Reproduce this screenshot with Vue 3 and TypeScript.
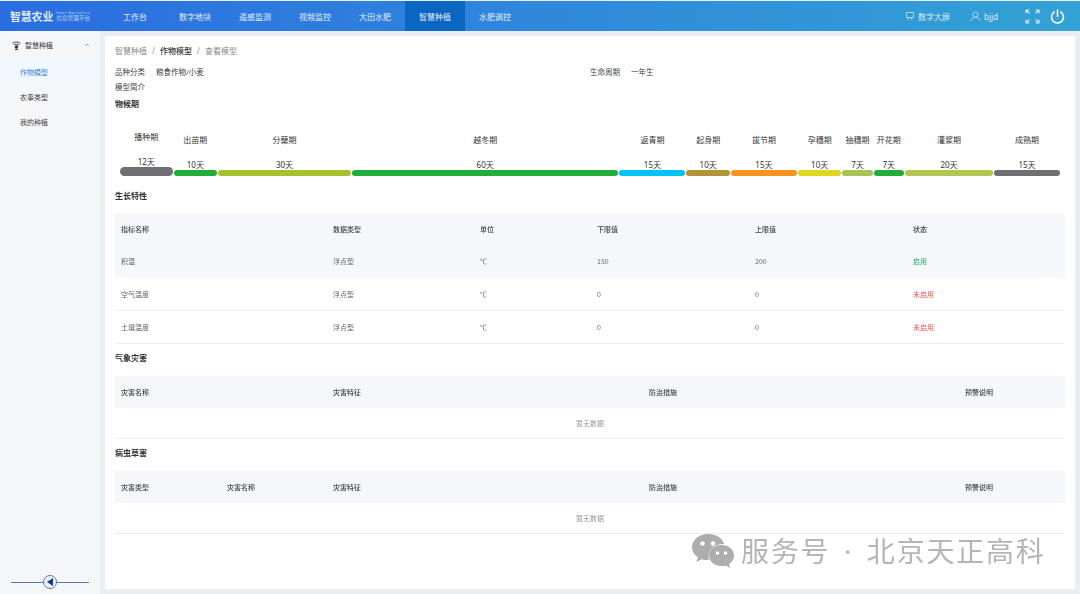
<script setup lang="ts">
const navItems = ["工作台", "数字地块", "遥感监测", "视频监控", "大田水肥", "智慧种植", "水肥调控"];
const sideItems = ["作物模型", "农事类型", "我的种植"];

const stages = [
  { name: "播种期", days: 12, color: "#6f6f72" },
  { name: "出苗期", days: 10, color: "#22ac38" },
  { name: "分蘖期", days: 30, color: "#a5c22e" },
  { name: "越冬期", days: 60, color: "#22ac38" },
  { name: "返青期", days: 15, color: "#00c3f5" },
  { name: "起身期", days: 10, color: "#b1943a" },
  { name: "拔节期", days: 15, color: "#f7931e" },
  { name: "孕穗期", days: 10, color: "#e0d61e" },
  { name: "抽穗期", days: 7, color: "#a9c256" },
  { name: "开花期", days: 7, color: "#22ac38" },
  { name: "灌浆期", days: 20, color: "#b0c650" },
  { name: "成熟期", days: 15, color: "#6f6f72" }
];

const traitRows = [
  { name: "积温", type: "浮点型", unit: "℃", low: 150, high: 200, on: true },
  { name: "空气温度", type: "浮点型", unit: "℃", low: 0, high: 0, on: false },
  { name: "土壤温度", type: "浮点型", unit: "℃", low: 0, high: 0, on: false }
];
const traitCols = [
  { label: "指标名称", width: 212 },
  { label: "数据类型", width: 147 },
  { label: "单位", width: 117 },
  { label: "下限值", width: 158 },
  { label: "上限值", width: 158 },
  { label: "状态", width: 158 }
];
const weatherCols = [
  { label: "灾害名称", width: 212 },
  { label: "灾害特征", width: 316 },
  { label: "防治措施", width: 316 },
  { label: "预警说明", width: 106 }
];
const pestCols = [
  { label: "灾害类型", width: 106 },
  { label: "灾害名称", width: 106 },
  { label: "灾害特征", width: 316 },
  { label: "防治措施", width: 316 },
  { label: "预警说明", width: 106 }
];
const emptyTables = [
  { title: "气象灾害", cols: weatherCols },
  { title: "病虫草害", cols: pestCols }
];
</script>

<template>
  <div class="page">
    <header class="topbar">
      <div class="logo">
        <span class="logo-main">智慧农业</span>
        <span class="logo-sub">
          <small>Smart Agriculture</small>
          <span>信息管理平台</span>
        </span>
      </div>
      <nav class="nav">
        <a v-for="item in navItems" :key="item" class="nav-item" :class="{ active: item === '智慧种植' }">{{ item }}</a>
      </nav>
      <div class="tools">
        <span class="tool screen">
          <svg width="10" height="10" viewBox="0 0 10 10" fill="none" stroke="currentColor" stroke-width="0.7">
            <path d="M1.5 1.5h7v5h-7zM3.500 6.500 3 9M6.500 6.500 7 9" />
          </svg>
          数字大屏
        </span>
        <span class="tool user">
          <svg width="11" height="11" viewBox="0 0 11 11" fill="none" stroke="currentColor" stroke-width="0.7">
            <circle cx="5.500" cy="3.600" r="2.600" />
            <path d="M1 10c.4-2.400 2.200-3.500 4.500-3.500S9.600 7.600 10 10" />
          </svg>
          bjjd
        </span>
        <svg class="full" width="15" height="15" viewBox="0 0 15 15" fill="none" stroke="currentColor" stroke-width="1.100">
          <path d="M1 4.500V1h3.500M1 1l3.500 3.500M14 4.500V1h-3.500M14 1l-3.500 3.500M1 10.500V14h3.500M1 14l3.500-3.500M14 10.500V14h-3.500M14 14l-3.500-3.500" />
        </svg>
        <svg class="power" width="15" height="15" viewBox="0 0 15 15" fill="none" stroke="currentColor" stroke-width="1.500" stroke-linecap="round">
          <path d="M7.500 1v6.500M4.200 3a6 6 0 1 0 6.600 0" />
        </svg>
      </div>
    </header>

    <div class="body">
      <aside class="sidebar">
        <div class="side-head">
          <svg width="9" height="9" viewBox="0 0 9 9" fill="none" stroke="#333" stroke-width="0.9">
            <path d="M.5 2.200C3 .6 6 .6 8.500 2.200M1.800 4C3.500 3 5.500 3 7.200 4" />
            <circle cx="4.500" cy="6" r="1.700" fill="#333" stroke="none" />
            <path d="M3 8.500h3" />
          </svg>
          <span>智慧种植</span>
          <svg class="chev" width="6" height="4" viewBox="0 0 6 4" fill="none" stroke="#888" stroke-width="0.7">
            <path d="M1 3 3 1l2 2" />
          </svg>
        </div>
        <a v-for="item in sideItems" :key="item" class="side-item" :class="{ active: item === '作物模型' }">{{ item }}</a>
        <div class="collapse">
          <span class="collapse-btn">
            <svg width="7" height="8" viewBox="0 0 7 8"><path d="M6 0v8L0 4z" fill="#123a8c" /></svg>
          </span>
        </div>
      </aside>

      <main class="card">
        <div class="crumbs">
          <span>智慧种植</span><i>/</i><b>作物模型</b><i>/</i><span>查看模型</span>
        </div>

        <div class="info">
          <div class="info-row">
            <span class="info-cell"><label>品种分类</label>粮食作物/小麦</span>
            <span class="info-cell"><label>生命周期</label>一年生</span>
          </div>
          <div class="info-row"><span class="info-cell"><label>模型简介</label></span></div>
        </div>

        <h3 class="section phen-title">物候期</h3>
        <div class="timeline">
          <div
            v-for="(s, i) in stages"
            :key="s.name"
            class="stage"
            :class="{ first: i === 0 }"
            :style="{ flexGrow: s.days }"
          >
            <span class="stage-name">{{ s.name }}</span>
            <span class="stage-days">{{ s.days }}天</span>
            <span class="stage-bar" :style="{ background: s.color }"></span>
          </div>
        </div>

        <h3 class="section trait-title">生长特性</h3>
        <table class="grid">
          <colgroup><col v-for="c in traitCols" :key="c.label" :style="{ width: c.width + 'px' }" /></colgroup>
          <thead>
            <tr><th v-for="c in traitCols" :key="c.label">{{ c.label }}</th></tr>
          </thead>
          <tbody>
            <tr v-for="(r, i) in traitRows" :key="r.name" :class="{ hover: i === 0 }">
              <td>{{ r.name }}</td>
              <td>{{ r.type }}</td>
              <td>{{ r.unit }}</td>
              <td>{{ r.low }}</td>
              <td>{{ r.high }}</td>
              <td :class="r.on ? 'on' : 'off'">{{ r.on ? "启用" : "未启用" }}</td>
            </tr>
          </tbody>
        </table>

        <template v-for="t in emptyTables" :key="t.title">
          <h3 class="section table-title">{{ t.title }}</h3>
          <table class="grid">
            <colgroup><col v-for="c in t.cols" :key="c.label" :style="{ width: c.width + 'px' }" /></colgroup>
            <thead>
              <tr><th v-for="c in t.cols" :key="c.label">{{ c.label }}</th></tr>
            </thead>
            <tbody>
              <tr><td class="empty" :colspan="t.cols.length">暂无数据</td></tr>
            </tbody>
          </table>
        </template>
      </main>
    </div>

    <div class="watermark">
      <svg width="42" height="34" viewBox="0 0 42 34">
        <path d="M16 0C7.200 0 0 5.900 0 13.200c0 4.100 2.300 7.700 5.800 10.100L4.400 28l5.300-2.800c1.900.6 4 .9 6.200.9.400 0 .8 0 1.200 0-.4-1.200-.6-2.400-.6-3.700 0-6.900 6.500-12.400 14.500-12.400.4 0 .8 0 1.200.1C30.600 4.100 24 0 16 0z" fill="#adadad" />
        <circle cx="10.500" cy="9.500" r="2.200" fill="#fff" />
        <circle cx="21" cy="9.500" r="2.200" fill="#fff" />
        <path d="M29.500 11C22.600 11 17 15.500 17 21.500S22.600 32 29.500 32c1.500 0 2.900-.2 4.200-.6L38 34l-1-3.800c3-2 5-5.100 5-8.700C42 15.500 36.400 11 29.500 11z" fill="#adadad" />
        <circle cx="25.500" cy="19" r="1.800" fill="#fff" />
        <circle cx="33.500" cy="19" r="1.800" fill="#fff" />
      </svg>
      <span>服务号 · 北京天正高科</span>
    </div>
  </div>
</template>

<style scoped>
.page {
  position: relative;
  width: 1080px;
  height: 594px;
  overflow: hidden;
  display: flex;
  flex-direction: column;
  background: #e9eef1;
  font-family: "Noto Sans", "Noto Sans CJK SC", sans-serif;
  color: #333;
}
.topbar {
  flex: none;
  height: 30px;
  margin-top: 1px;
  display: flex;
  align-items: center;
  background: linear-gradient(90deg, #2a6de0 0%, #2f82dc 40%, #33a2d4 100%);
  color: #fff;
}
.logo {
  width: 105px;
  padding-left: 10px;
  box-sizing: border-box;
  display: flex;
  align-items: center;
  gap: 3px;
}
.logo-main {
  font-size: 10.8px;
  font-weight: 700;
  color: #dfeafa;
  white-space: nowrap;
}
.logo-sub {
  display: flex;
  flex-direction: column;
  font-size: 5.700px;
  line-height: 6px;
  color: #b9d2f5;
  white-space: nowrap;
}
.logo-sub small {
  font-size: 3.500px;
  line-height: 4px;
  letter-spacing: 0.3px;
}
.nav {
  display: flex;
  height: 100%;
}
.nav-item {
  width: 60px;
  display: flex;
  align-items: center;
  justify-content: center;
  font-size: 8px;
  color: #e3eefb;
}
.nav-item.active {
  background: #0b66c3;
}
.tools {
  margin-left: auto;
  display: flex;
  align-items: center;
  font-size: 8px;
  color: #dcecf8;
}
.tool {
  display: flex;
  align-items: center;
  gap: 3px;
}
.screen {
  margin-right: 20px;
}
.user {
  margin-right: 27px;
}
.full {
  margin-right: 10px;
}
.power {
  margin-right: 15px;
  color: #fff;
}
.body {
  flex: 1;
  min-height: 0;
  display: flex;
  padding: 5px 5px 5px 0;
  gap: 5px;
}
.sidebar {
  position: relative;
  width: 100px;
  margin: -5px 0 -5px;
  background: #f5f6f7;
  display: flex;
  flex-direction: column;
  padding-top: 2px;
}
.side-head {
  height: 24px;
  margin-bottom: 2px;
  display: flex;
  align-items: center;
  gap: 4px;
  padding: 0 10px 0 12px;
  font-size: 7px;
  color: #333;
}
.chev {
  margin-left: auto;
}
.side-item {
  height: 25px;
  display: flex;
  align-items: center;
  padding-left: 20px;
  font-size: 7px;
  color: #444;
}
.side-item.active {
  background: #f0f7fd;
  color: #3f80dc;
}
.collapse {
  position: absolute;
  left: 11px;
  right: 11px;
  bottom: 11px;
  height: 1px;
  background: #5a76b8;
}
.collapse-btn {
  position: absolute;
  left: 32px;
  top: -7px;
  width: 14px;
  height: 14px;
  box-sizing: border-box;
  border: 1px solid #5a76b8;
  border-radius: 50%;
  background: #eef1f8;
  display: flex;
  align-items: center;
  justify-content: center;
}
.card {
  flex: 1;
  min-width: 0;
  background: #fff;
  padding: 8px 10px 0;
}
.crumbs {
  height: 13px;
  display: flex;
  align-items: center;
  font-size: 8px;
  color: #8a8a8a;
}
.crumbs i {
  font-style: normal;
  margin: 0 5px;
  color: #999;
}
.crumbs b {
  font-weight: 500;
  color: #333;
}
.info {
  margin-top: 7px;
  font-size: 7.500px;
  color: #444;
}
.info-row {
  display: flex;
  height: 15px;
  align-items: center;
}
.info-cell {
  width: 475px;
}
.info-cell label {
  margin-right: 11px;
}
.section {
  margin: 0;
  font-size: 8px;
  line-height: 12px;
  font-weight: 700;
  color: #333;
}
.phen-title {
  margin-top: 4px;
}
.timeline {
  display: flex;
  align-items: flex-end;
  height: 50px;
  margin: 16px 4.500px 0;
}
.stage {
  flex: 1 1 0;
  min-width: 0;
  display: flex;
  flex-direction: column;
  align-items: center;
  font-size: 8px;
  color: #333;
  white-space: nowrap;
}
.stage-name {
  line-height: 12px;
  margin-bottom: 13px;
}
.stage-days {
  line-height: 11px;
}
.stage-bar {
  align-self: stretch;
  height: 6px;
  margin: 0 0.5px;
  border-radius: 3px;
}
.stage.first .stage-bar {
  height: 9px;
  border-radius: 4.500px;
}
.trait-title {
  margin-top: 14px;
}
.grid {
  width: 950px;
  table-layout: fixed;
  border-collapse: collapse;
  font-size: 7px;
  font-family: "Noto Sans CJK SC", "Noto Sans", sans-serif;
  /* separate layer keeps the tiny digits grey instead of colour-fringed */
  will-change: opacity;
}
.trait-title + .grid {
  margin-top: 11px;
}
.table-title {
  margin-top: 8px;
}
.table-title + .grid {
  margin-top: 12px;
}
.grid th {
  height: 32px;
  padding: 0 6px;
  text-align: left;
  font-weight: 500;
  background: #f5f7fa;
  color: #444;
}
.grid td {
  height: 32px;
  padding: 0 6px;
  color: #666;
  border-bottom: 1px solid #ebeef5;
}
.grid tr.hover td {
  background: #f5f7fa;
  border-bottom-color: #f5f7fa;
}
.grid td.on {
  color: #22ac58;
}
.grid td.off {
  color: #f0524f;
}
.grid td.empty {
  height: 30px;
  text-align: center;
  color: #999;
}
.watermark {
  position: absolute;
  left: 692px;
  top: 534px;
  display: flex;
  align-items: center;
  gap: 7px;
  pointer-events: none;
}
.watermark span {
  font-size: 28px;
  line-height: 34px;
  letter-spacing: 1.800px;
  word-spacing: 4.500px;
  color: #b5b5b5;
  white-space: nowrap;
}
</style>
